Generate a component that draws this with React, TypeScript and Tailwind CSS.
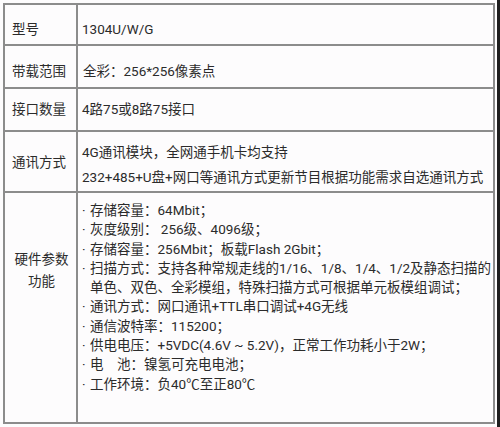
import React from "react";

const font = { fontFamily: 'Roboto, "Noto Sans CJK SC", sans-serif' };

function Bullet({ children }: { children: React.ReactNode }) {
  return (
    <div className="flex">
      <span className="w-[8px] shrink-0 text-left">·</span>
      <span>{children}</span>
    </div>
  );
}

export default function App() {
  return (
    <div className="w-[500px] h-[427px] bg-[#fdfcfd] flex text-[#2b2b2b] text-[13.5px] leading-none" style={font}>
      <div className="pl-[3px] pt-[3px]">
        <div className="w-[492px] h-[421px] border-2 border-[#8c8c8c] flex flex-col">
          <div className="flex h-[41px] border-b-2 border-[#8c8c8c]">
            <div className="w-[73px] shrink-0 border-r-2 border-[#8c8c8c] pl-[7px] pt-[11px] flex items-center">型号</div>
            <div className="pl-[4px] pt-[11px] flex items-center">1304U/W/G</div>
          </div>
          <div className="flex h-[43px] border-b-2 border-[#8c8c8c]">
            <div className="w-[73px] shrink-0 border-r-2 border-[#8c8c8c] pl-[7px] pt-[10px] flex items-center">带载范围</div>
            <div className="pl-[5px] pt-[10px] flex items-center">全彩：256*256像素点</div>
          </div>
          <div className="flex h-[43px] border-b-2 border-[#8c8c8c]">
            <div className="w-[73px] shrink-0 border-r-2 border-[#8c8c8c] pl-[7px] flex items-center">接口数量</div>
            <div className="pl-[4px] flex items-center">4路75或8路75接口</div>
          </div>
          <div className="flex h-[61px] border-b-2 border-[#8c8c8c]">
            <div className="w-[73px] shrink-0 border-r-2 border-[#8c8c8c] pl-[7px] pt-[2px] flex items-center">通讯方式</div>
            <div className="pl-[4px] pt-[7px] flex flex-col justify-center gap-[11px] whitespace-nowrap">
              <div>4G通讯模块，全网通手机卡均支持</div>
              <div>232+485+U盘+网口等通讯方式更新节目根据功能需求自选通讯方式</div>
            </div>
          </div>
          <div className="flex flex-1">
            <div className="w-[73px] shrink-0 border-r-2 border-[#8c8c8c] pt-[60px] flex flex-col items-center gap-[8px] pl-[2px]">
              <div>硬件参数</div>
              <div>功能</div>
            </div>
            <div className="pl-[4px] pt-[11px] flex flex-col gap-[5.8px] whitespace-nowrap">
              <Bullet>存储容量：64Mbit；</Bullet>
              <Bullet>灰度级别： 256级、4096级；</Bullet>
              <Bullet>存储容量：256Mbit；板载Flash 2Gbit；</Bullet>
              <Bullet>扫描方式：支持各种常规走线的1/16、1/8、1/4、1/2及静态扫描的</Bullet>
              <div className="pl-[8px]">单色、双色、全彩模组，特殊扫描方式可根据单元板模组调试；</div>
              <Bullet>通讯方式：网口通讯+TTL串口调试+4G无线</Bullet>
              <Bullet>通信波特率：115200；</Bullet>
              <Bullet>供电电压：+5VDC(4.6V ~ 5.2V)，正常工作功耗小于2W；</Bullet>
              <Bullet>电　池：镍氢可充电电池；</Bullet>
              <Bullet>工作环境：负40℃至正80℃</Bullet>
            </div>
          </div>
        </div>
      </div>
      <div className="flex-1" />
      <div className="w-[3px] h-full bg-[#1e1e1e]" />
    </div>
  );
}
